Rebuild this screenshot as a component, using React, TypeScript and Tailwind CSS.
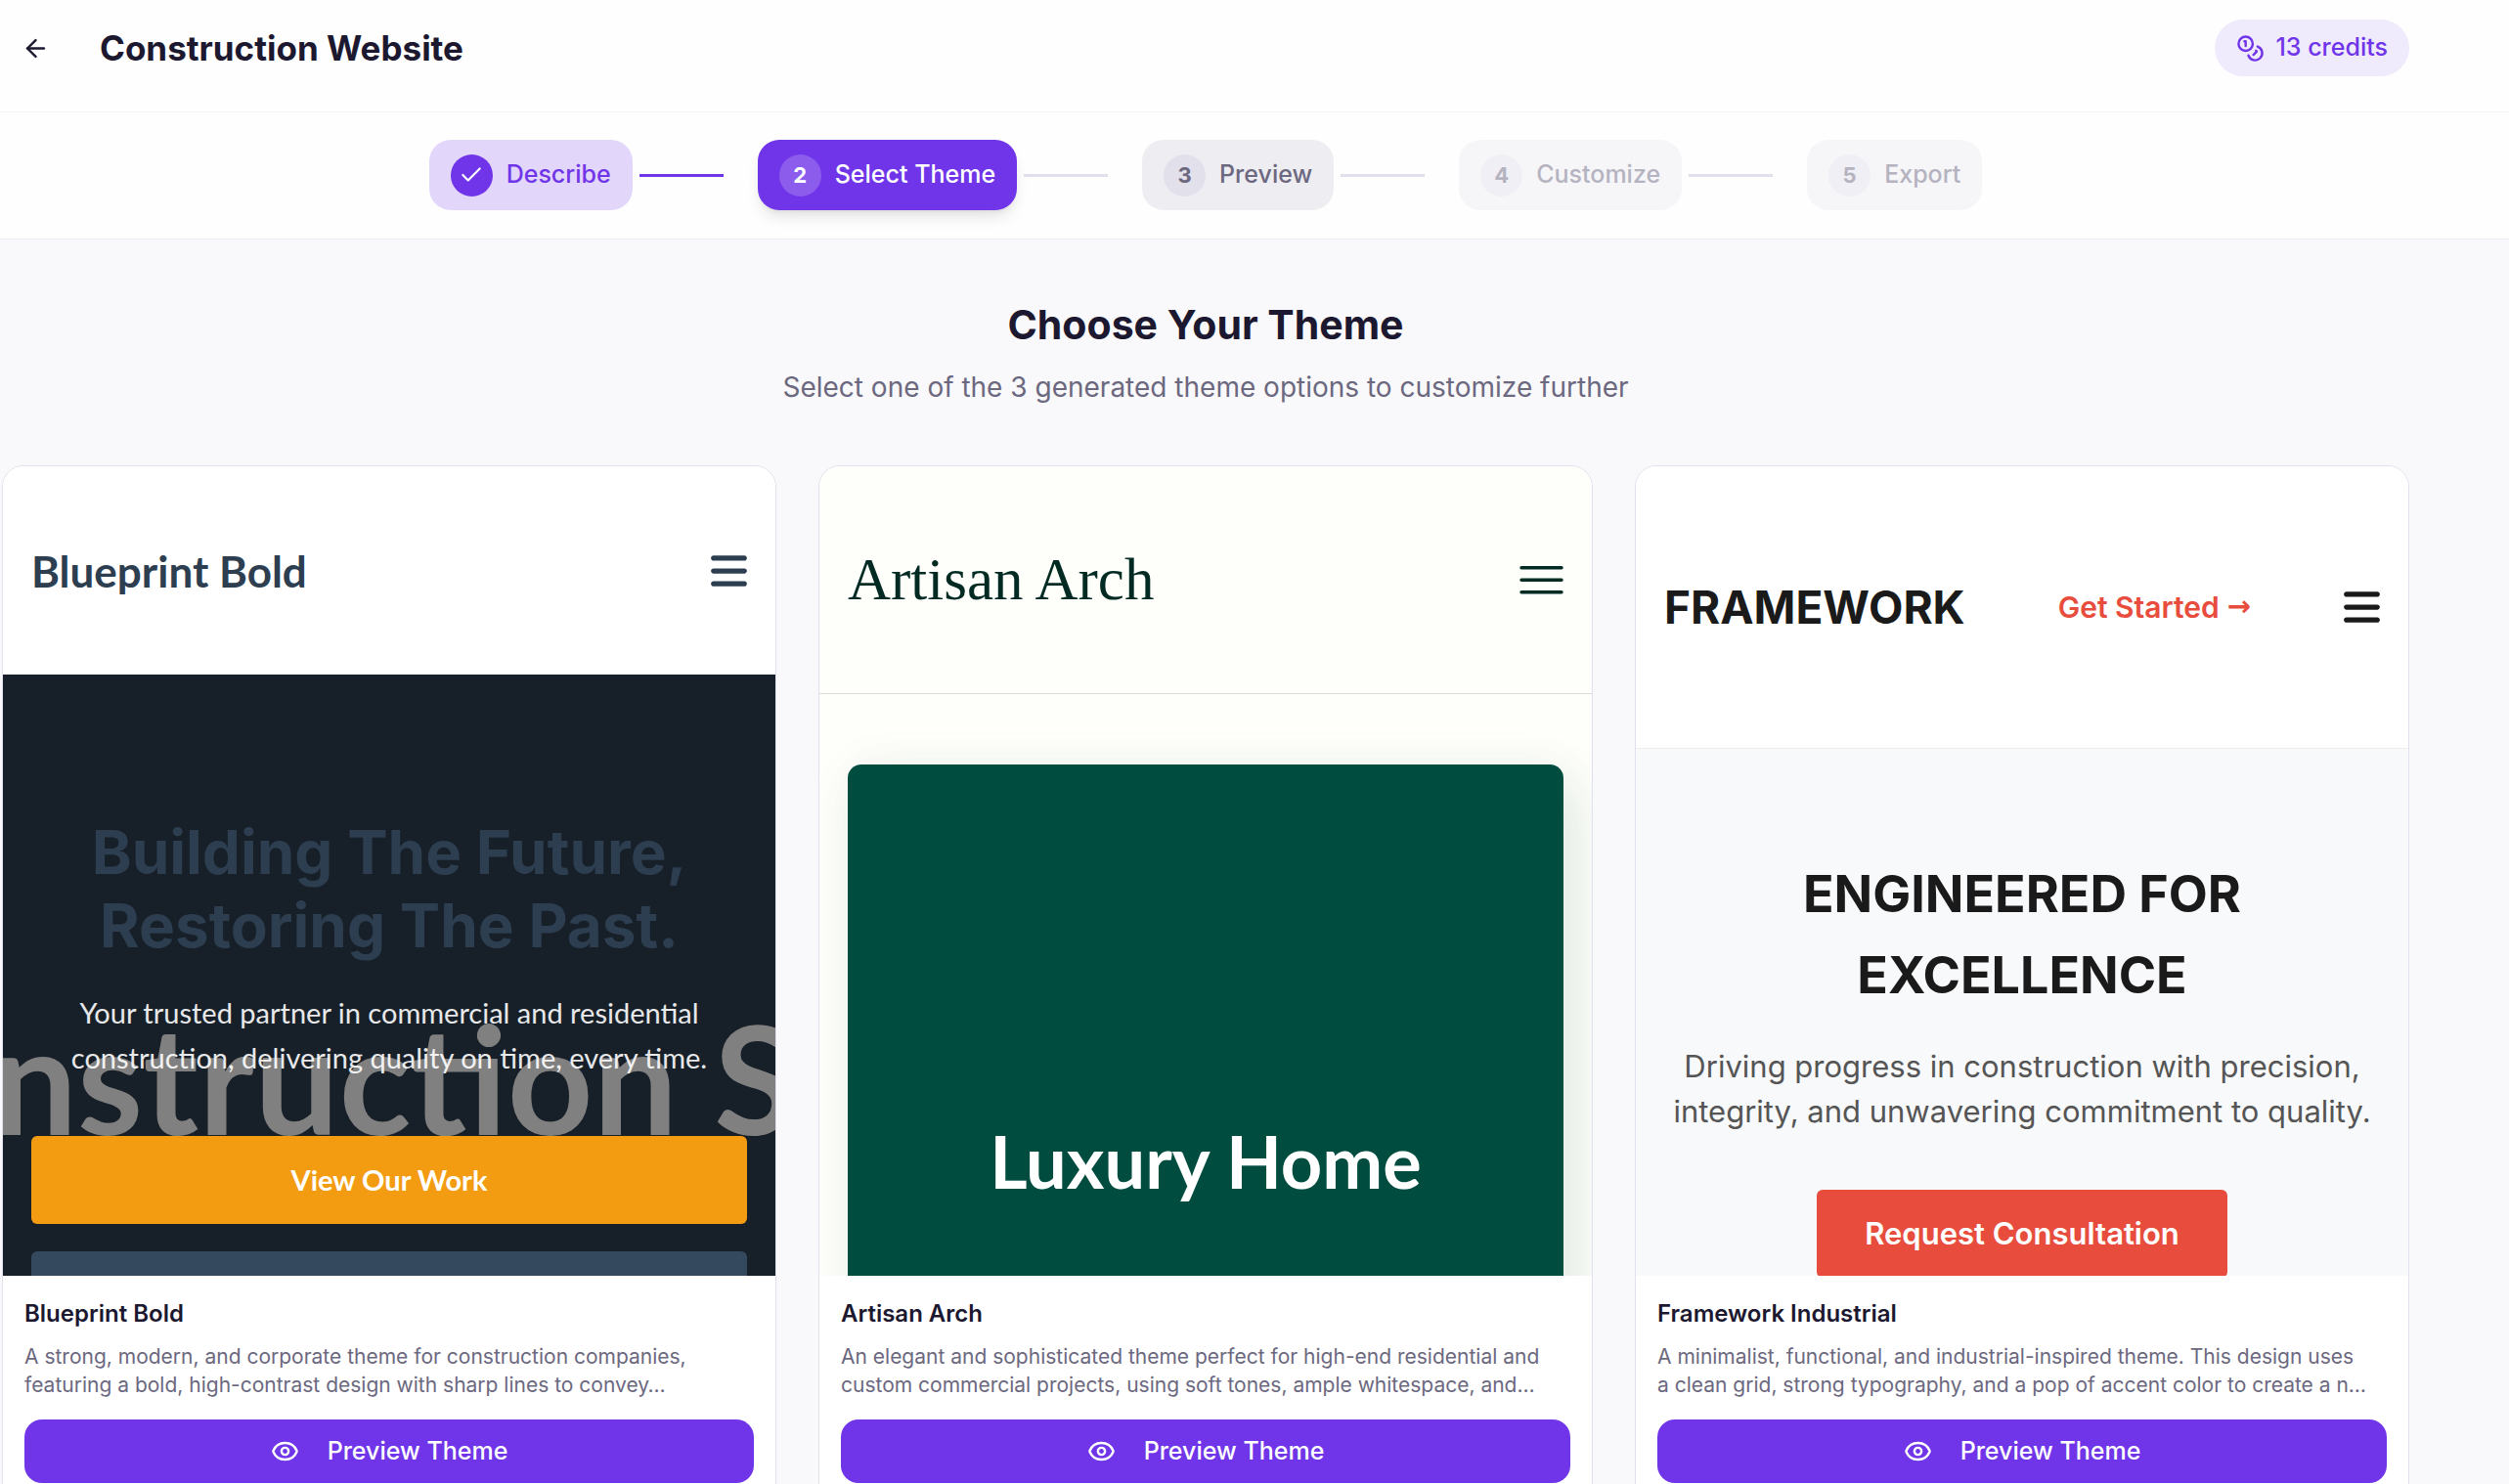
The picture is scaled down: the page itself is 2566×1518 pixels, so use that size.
import { ArrowLeft, Check, Coins, Eye } from "lucide-react";
import { FaBars } from "react-icons/fa6";
import clsx from "clsx";

type StepState = "done" | "active" | "next" | "locked";

interface Step {
  label: string;
  state: StepState;
}

interface Theme {
  name: string;
  description: [string, string];
  preview: React.ReactNode;
}

const steps: Step[] = [
  { label: "Describe", state: "done" },
  { label: "Select Theme", state: "active" },
  { label: "Preview", state: "next" },
  { label: "Customize", state: "locked" },
  { label: "Export", state: "locked" },
];

const pillStyles: Record<StepState, string> = {
  done: "bg-[#e2d6fa] text-[#7035e8]",
  active: "bg-[#7035e8] text-white shadow-lg",
  next: "bg-[#eeedf2] text-[#6b6880]",
  locked: "bg-[#f6f6f9] text-[#b5b3c0]",
};

const badgeStyles: Record<StepState, string> = {
  done: "bg-[#7035e8] text-white",
  active: "bg-[#8c5ded] text-white",
  next: "bg-[#e2e0eb] text-[#6b6880]",
  locked: "bg-[#f0eff5] text-[#b5b3c0]",
};

function Stepper() {
  return (
    <nav aria-label="Progress" className="border-b border-[#ecebf3] bg-[#fefefe]">
      <ol className="flex items-center justify-center gap-[35px] pt-7 pr-[102px] pb-[29px] pl-0.5">
        {steps.map((step, i) => (
          <li key={step.label} className="flex items-center gap-[7px]">
            <button
              disabled={step.state === "locked"}
              className={clsx(
                "flex h-[72px] items-center gap-[14px] rounded-[22px] px-[22px] text-[25px] font-medium",
                pillStyles[step.state]
              )}
            >
              <span
                className={clsx(
                  "flex h-[43px] w-[43px] items-center justify-center rounded-full text-[22px] font-bold",
                  badgeStyles[step.state]
                )}
              >
                {step.state === "done" ? <Check className="h-[26px] w-[26px]" /> : i + 1}
              </span>
              {step.label}
            </button>
            {i < steps.length - 1 && (
              <span className={clsx("h-[3px] w-[86px]", step.state === "done" ? "bg-[#7035e8]" : "bg-[#e2e0ec]")} />
            )}
          </li>
        ))}
      </ol>
    </nav>
  );
}

function BlueprintPreview() {
  return (
    <div className="bg-white font-['Lato',sans-serif]">
      <div className="flex h-[213px] items-center justify-between px-[29px] text-[#2c3e50]">
        <span className="text-[44px] font-bold">Blueprint Bold</span>
        <FaBars className="h-[42px] w-[37px]" />
      </div>
      <div className="relative overflow-hidden bg-[#171f28] px-[29px] pt-36 pb-36 text-center">
        {/* placeholder caption behind the hero copy */}
        <div className="absolute inset-x-0 top-[320px] flex justify-center text-[153px] font-bold leading-[184px] whitespace-nowrap text-[#808080]">
          <span>Construction Site</span>
        </div>
        <div className="relative">
          <h2 className="font-['Inter',sans-serif] text-[62px] font-bold leading-[75px] text-[#2c3e50]">
            Building The Future,
            <br />
            Restoring The Past.
          </h2>
          <p className="mt-[29px] text-[29px] leading-[46px] text-white/90">
            Your trusted partner in commercial and residential
            <br />
            construction, delivering quality on time, every time.
          </p>
          <div className="mt-[57px] flex flex-col gap-7">
            <button className="h-[90px] rounded-md bg-[#f39c12] text-[29px] font-bold text-white">View Our Work</button>
            <div className="h-[90px] rounded-md bg-[#34495e]" />
          </div>
        </div>
      </div>
    </div>
  );
}

function ArtisanPreview() {
  return (
    <div className="bg-[#fefffa] text-[#002a22]">
      <div className="flex h-[233px] items-center justify-between border-b border-[#d9dcd8] px-[29px]">
        <span className="font-['Liberation_Serif',serif] text-[61px]">Artisan Arch</span>
        <svg viewBox="0 0 45 29" className="h-[29px] w-[45px]" stroke="currentColor" strokeWidth="3.4" strokeLinecap="round">
          <path d="M2 1.7h41M2 14.2h41M2 26.7h41" />
        </svg>
      </div>
      <div className="px-[29px] pt-[72px]">
        <div className="flex h-[810px] items-center justify-center rounded-[14px] bg-[#004d40] font-['Lato',sans-serif] text-[74px] font-bold text-white shadow-[0_0_54px_rgba(0,0,0,0.04),18px_18px_54px_rgba(0,77,64,0.09)]">
          Luxury Home
        </div>
      </div>
    </div>
  );
}

function FrameworkPreview() {
  return (
    <div className="bg-white text-[#1a1a1a]">
      <div className="flex h-[289px] items-center justify-between border-b border-[#eeeeee] px-[29px]">
        <span className="text-[46px] font-bold">FRAMEWORK</span>
        <a href="#start" className="flex items-center gap-2 text-[30px] font-semibold text-[#e74c3c]">
          Get Started
          <span className="font-['DejaVu_Sans',sans-serif] text-[29px] font-bold">→</span>
        </a>
        <FaBars className="h-[42px] w-[37px]" />
      </div>
      <div className="flex flex-col items-center bg-[#f8f9fb] px-[29px] pt-[107px] pb-36 text-center">
        <h2 className="text-[52px] font-bold leading-[83px]">
          ENGINEERED FOR
          <br />
          EXCELLENCE
        </h2>
        <p className="mt-[29px] text-[31px] leading-[46px] whitespace-nowrap text-[#555555]">
          Driving progress in construction with precision,
          <br />
          integrity, and unwavering commitment to quality.
        </p>
        <button className="mt-[57px] h-[90px] rounded-md bg-[#e74c3c] px-[49px] text-[31px] font-semibold text-white">
          Request Consultation
        </button>
      </div>
    </div>
  );
}

const themes: Theme[] = [
  {
    name: "Blueprint Bold",
    description: [
      "A strong, modern, and corporate theme for construction companies,",
      "featuring a bold, high-contrast design with sharp lines to convey…",
    ],
    preview: <BlueprintPreview />,
  },
  {
    name: "Artisan Arch",
    description: [
      "An elegant and sophisticated theme perfect for high-end residential and",
      "custom commercial projects, using soft tones, ample whitespace, and…",
    ],
    preview: <ArtisanPreview />,
  },
  {
    name: "Framework Industrial",
    description: [
      "A minimalist, functional, and industrial-inspired theme. This design uses",
      "a clean grid, strong typography, and a pop of accent color to create a n…",
    ],
    preview: <FrameworkPreview />,
  },
];

function ThemeCard({ theme }: { theme: Theme }) {
  return (
    <article className="overflow-hidden rounded-[22px] border border-[#e2e0ec] bg-white">
      <div className="h-[828px] overflow-hidden">{theme.preview}</div>
      <div className="px-[22px] pt-[21px] pb-[22px]">
        <h3 className="text-[24px] font-semibold leading-9">{theme.name}</h3>
        <p className="mt-[11px] text-[21px] leading-[29px] text-[#6b6880]">
          {theme.description[0]}
          <br />
          {theme.description[1]}
        </p>
        <button className="mt-[21px] flex h-[65px] w-full items-center justify-center gap-[29px] rounded-[18px] bg-[#7035e8] text-[25px] font-medium text-white">
          <Eye className="h-[29px] w-[29px]" />
          Preview Theme
        </button>
      </div>
    </article>
  );
}

export default function App() {
  return (
    <div className="h-screen overflow-hidden bg-[#f9f9fb] font-['Inter',sans-serif] text-[#1c1830]">
      <header className="border-b border-[#f3f2f7] bg-[#fefefe]">
        <div className="flex h-[114px] items-start justify-between pt-5 pr-[102px] pl-[22px]">
          <div className="flex h-[58px] items-center gap-[51px]">
            <button aria-label="Back">
              <ArrowLeft className="h-[29px] w-[29px]" />
            </button>
            <h1 className="text-[35px] font-bold">Construction Website</h1>
          </div>
          <div className="flex h-[58px] items-center gap-[11px] rounded-full bg-[#efeafc] px-[22px] text-[25px] font-medium text-[#7035e8]">
            <Coins className="h-[29px] w-[29px]" />
            13 credits
          </div>
        </div>
      </header>

      <Stepper />

      <main className="pt-[58px] pr-[102px] pb-9 pl-0.5">
        <div className="text-center">
          <h2 className="text-[41px] font-bold leading-[58px]">Choose Your Theme</h2>
          <p className="mt-[14px] text-[28px] leading-[43px] text-[#6b6880]">
            Select one of the 3 generated theme options to customize further
          </p>
        </div>
        <div className="mt-[58px] grid grid-cols-3 gap-[43px]">
          {themes.map((theme) => (
            <ThemeCard key={theme.name} theme={theme} />
          ))}
        </div>
      </main>
    </div>
  );
}
